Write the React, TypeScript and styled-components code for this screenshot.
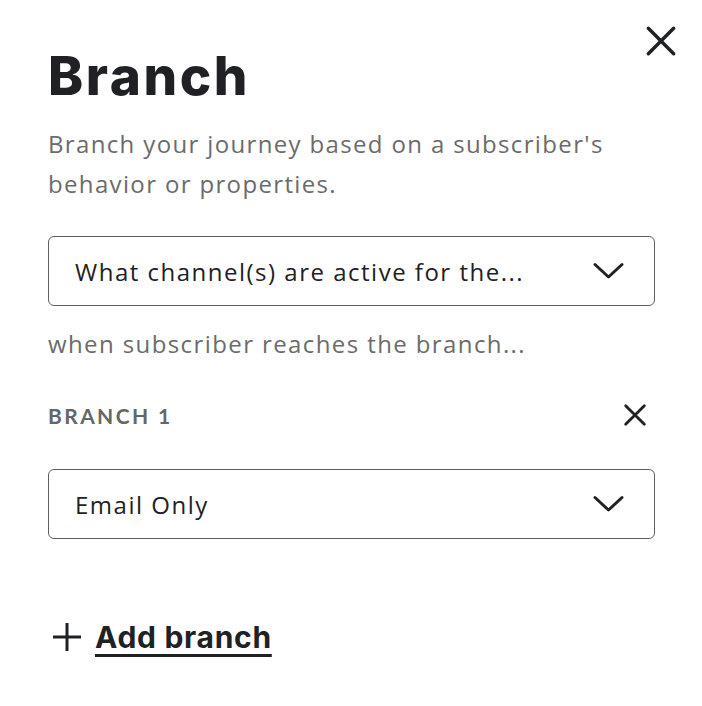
import styled, { createGlobalStyle } from "styled-components";

const GlobalStyle = createGlobalStyle`
  html, body {
    margin: 0;
    padding: 0;
    background: #ffffff;
  }
  body {
    font-family: "Open Sans", Lato, sans-serif;
    color: #1f2124;
  }
`;

const Panel = styled.div`
  position: relative;
  width: 702px;
  height: 706px;
  box-sizing: border-box;
  padding: 44px 47px 0 48px;
  display: flex;
  flex-direction: column;
`;

const CloseButton = styled.button`
  position: absolute;
  top: 22px;
  right: 24px;
  width: 36px;
  height: 36px;
  padding: 0;
  border: none;
  background: none;
  display: grid;
  place-items: center;
  color: #1f2124;
  cursor: pointer;
`;

const Title = styled.h1`
  margin: 0;
  font-family: Inter, "Noto Sans", sans-serif;
  font-weight: 800;
  font-size: 53px;
  line-height: 64px;
  letter-spacing: 2.6px;
  color: #1f2124;
`;

const Description = styled.p`
  margin: 16px 0 0;
  font-size: 24px;
  line-height: 40px;
  letter-spacing: 1.35px;
  color: #6b6b6b;
  max-width: 600px;
`;

const Select = styled.div<{ $top: number }>`
  margin-top: ${(p) => p.$top}px;
  height: 70px;
  box-sizing: border-box;
  border: 1.5px solid #5f5f5f;
  border-radius: 6px;
  padding: 0 30px 0 26px;
  display: flex;
  align-items: center;
  justify-content: space-between;
  font-size: 24px;
  letter-spacing: 1.5px;
  color: #1f2124;
`;

const Hint = styled.div`
  margin-top: 18px;
  font-size: 24px;
  line-height: 40px;
  letter-spacing: 1.4px;
  color: #6b6b6b;
`;

const BranchHead = styled.div`
  margin-top: 35px;
  height: 32px;
  display: flex;
  align-items: center;
  justify-content: space-between;
  padding-right: 6px;
`;

const BranchLabel = styled.div`
  font-family: Lato, sans-serif;
  font-size: 21px;
  font-weight: 700;
  letter-spacing: 2.4px;
  color: #666666;
  text-transform: uppercase;
`;

const RemoveButton = styled.button`
  width: 28px;
  height: 28px;
  padding: 0;
  border: none;
  background: none;
  display: grid;
  place-items: center;
  color: #1f2124;
`;

const AddRow = styled.div`
  margin-top: 80px;
  display: flex;
  align-items: center;
  gap: 13px;
  padding-left: 4px;
`;

const AddLink = styled.a`
  font-family: Inter, "Noto Sans", sans-serif;
  font-weight: 700;
  font-size: 30px;
  letter-spacing: 0.7px;
  color: #1f2124;
  text-decoration: underline;
  text-decoration-thickness: 3px;
  text-underline-offset: 6px;
  cursor: pointer;
`;

function Cross({ size, stroke }: { size: number; stroke: number }) {
  return (
    <svg width={size} height={size} viewBox="0 0 24 24" fill="none">
      <path
        d="M4 4L20 20M20 4L4 20"
        stroke="currentColor"
        strokeWidth={stroke}
        strokeLinecap="round"
      />
    </svg>
  );
}

function Chevron() {
  return (
    <svg width="31" height="18" viewBox="0 0 31 18" fill="none">
      <path
        d="M2 2.5L15.5 15L29 2.5"
        stroke="#1f2124"
        strokeWidth="3"
        strokeLinecap="round"
        strokeLinejoin="round"
      />
    </svg>
  );
}

function Plus() {
  return (
    <svg width="30" height="30" viewBox="0 0 30 30" fill="none">
      <path d="M15 1V29M1 15H29" stroke="#1f2124" strokeWidth="3" />
    </svg>
  );
}

export default function App() {
  return (
    <>
      <GlobalStyle />
      <Panel>
        <CloseButton aria-label="Close">
          <Cross size={38} stroke={2.2} />
        </CloseButton>
        <Title>Branch</Title>
        <Description>
          Branch your journey based on a subscriber's behavior or properties.
        </Description>
        <Select $top={32}>
          <span>What channel(s) are active for the...</span>
          <Chevron />
        </Select>
        <Hint>when subscriber reaches the branch...</Hint>
        <BranchHead>
          <BranchLabel>Branch 1</BranchLabel>
          <RemoveButton aria-label="Remove branch">
            <Cross size={28} stroke={2.4} />
          </RemoveButton>
        </BranchHead>
        <Select $top={38}>
          <span>Email Only</span>
          <Chevron />
        </Select>
        <AddRow>
          <Plus />
          <AddLink>Add branch</AddLink>
        </AddRow>
      </Panel>
    </>
  );
}
